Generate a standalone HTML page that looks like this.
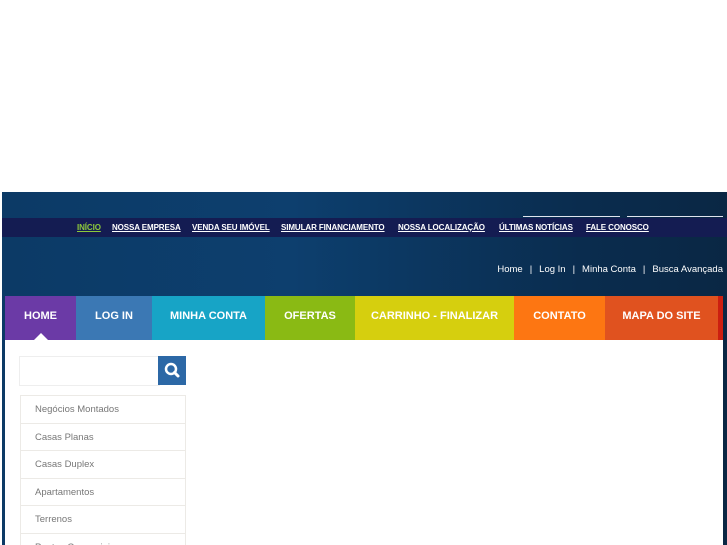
<!DOCTYPE html><html style="height:545px;overflow:hidden"><head><style>
body{margin:0;width:727px;height:545px;overflow:hidden;background:#fff;font-family:"Liberation Sans",sans-serif;position:relative}
.hdr{position:absolute;left:2px;top:192px;width:725px;height:353px;background:linear-gradient(90deg,#0c3a66,#0d3f6e 40%,#0a2c4e 80%,#0a2744)}
.strip{position:absolute;left:2px;top:218px;width:725px;height:19px;background:#141c52}
.strip a{position:absolute;top:5px;font-size:8px;font-weight:bold;color:#fff;text-decoration:underline;white-space:nowrap;letter-spacing:-0.1px}
.ln{position:absolute;top:216px;height:1px;background:#dfe3ee}
.util{position:absolute;top:264px;right:4px;font-size:9.5px;color:#fff;white-space:nowrap}
.util span{margin:0 7px}
.nav{position:absolute;top:296px;height:44px;color:#fff;font-size:11px;font-weight:bold;text-align:center;line-height:41px}
.content{position:absolute;left:5px;top:340px;width:718px;height:205px;background:#fff}
.search{position:absolute;left:19px;top:356px;width:139px;height:28px;border:1px solid #eee;background:#fff}
.btn{position:absolute;left:158px;top:356px;width:28px;height:29px;background:#2c68a6}
.menu{position:absolute;left:20px;top:395px;width:166px;height:150px;overflow:hidden}
.menu div{height:26.5px;border:1px solid #eceae6;border-bottom:none;font-size:9.5px;color:#777;line-height:27px;padding-left:14px}
</style></head><body>
<div class="hdr"></div>
<div class="strip">
<a style="left:75px;color:#8cc83c">INÍCIO</a>
<a style="left:110px">NOSSA EMPRESA</a>
<a style="left:190px">VENDA SEU IMÓVEL</a>
<a style="left:279px">SIMULAR FINANCIAMENTO</a>
<a style="left:396px">NOSSA LOCALIZAÇÃO</a>
<a style="left:497px">ÚLTIMAS NOTÍCIAS</a>
<a style="left:584px">FALE CONOSCO</a>
</div>
<div class="ln" style="left:523px;width:97px"></div>
<div class="ln" style="left:627px;width:96px"></div>
<div class="util">Home<span>|</span>Log In<span>|</span>Minha Conta<span>|</span>Busca Avançada</div>
<div class="nav" style="left:5px;width:71px;background:#6b3aa6">HOME</div>
<div class="nav" style="left:76px;width:76px;background:#3b78b4">LOG IN</div>
<div class="nav" style="left:152px;width:113px;background:#17a4c6">MINHA CONTA</div>
<div class="nav" style="left:265px;width:90px;background:#8aba14">OFERTAS</div>
<div class="nav" style="left:355px;width:159px;background:#d6cf0e">CARRINHO - FINALIZAR</div>
<div class="nav" style="left:514px;width:91px;background:#fd7612">CONTATO</div>
<div class="nav" style="left:605px;width:113px;background:#e0521f">MAPA DO SITE</div>
<div class="nav" style="left:718px;width:5px;background:#cc1f10"></div>
<div class="content"></div>
<div style="position:absolute;left:34px;top:333px;width:0;height:0;border-left:7px solid transparent;border-right:7px solid transparent;border-bottom:7px solid #fff"></div>
<div class="search"></div>
<div class="btn"><svg width="28" height="29" viewBox="0 0 28 29"><circle cx="13" cy="13" r="5" fill="none" stroke="#fff" stroke-width="2.5"/><path d="M16.5 16.5L20 20" stroke="#fff" stroke-width="3" stroke-linecap="round"/></svg></div>
<div class="menu">
<div>Negócios Montados</div><div>Casas Planas</div><div>Casas Duplex</div><div>Apartamentos</div><div>Terrenos</div><div>Pontos Comerciais</div>
</div>
</body></html>
